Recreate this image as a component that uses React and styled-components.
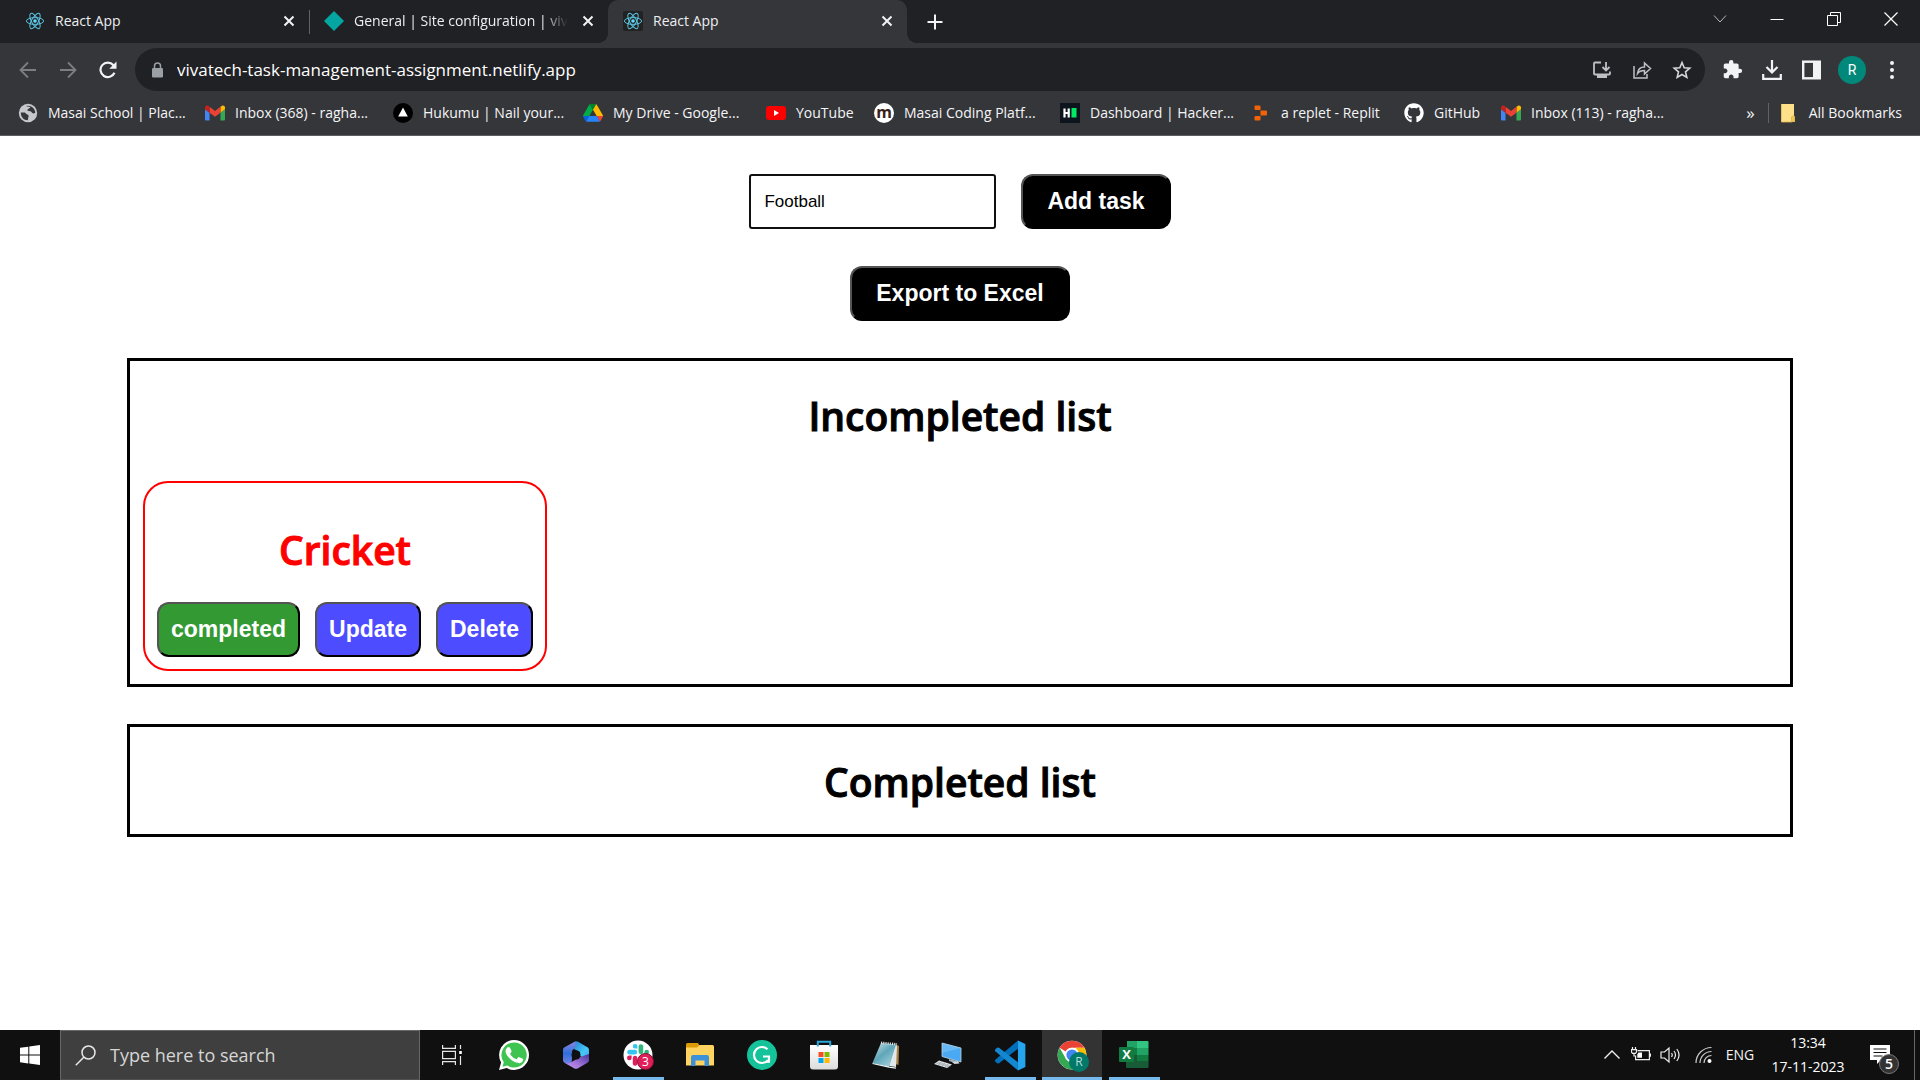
import React, { useState } from "react";
import styled, { createGlobalStyle } from "styled-components";
import { FaGithub } from "react-icons/fa";
import { MdExtension } from "react-icons/md";

const ui = `"Segoe UI", "Open Sans", "Noto Sans", sans-serif`;
const arial = `"Liberation Sans", Arial, sans-serif`;

const GlobalStyle = createGlobalStyle`
  *, *::before, *::after { box-sizing: border-box; }
  body { margin: 0; background: #fff; font-family: ${ui}; }
  button, input { font: inherit; margin: 0; }
  svg { display: block; flex: none; }
`;

const Screen = styled.div`
  display: flex;
  flex-direction: column;
  min-height: 100vh;
`;

/* ---------- browser chrome ---------- */

const Browser = styled.header`
  background: #35363a;
  color: #f1f3f4;
  border-bottom: 1px solid #5c5d60;
`;

const TabStrip = styled.div`
  display: flex;
  height: 43px;
  padding-left: 10px;
  background: #202124;
`;

const Tab = styled.div`
  position: relative;
  display: flex;
  align-items: center;
  gap: 10px;
  flex: 0 1 299px;
  min-width: 0;
  padding: 0 10px 2px 15px;
  border-radius: 10px 10px 0 0;
  background: ${(p) => (p.$active ? "#35363a" : "transparent")};

  &::before,
  &::after {
    content: "";
    display: ${(p) => (p.$active ? "block" : "none")};
    position: absolute;
    bottom: 0;
    width: 10px;
    height: 10px;
  }
  &::before {
    right: 100%;
    background: radial-gradient(circle at 0 0, transparent 10px, #35363a 10px);
  }
  &::after {
    left: 100%;
    background: radial-gradient(circle at 100% 0, transparent 10px, #35363a 10px);
  }
`;

const TabDivider = styled.span`
  align-self: center;
  flex: none;
  width: 1px;
  height: 24px;
  margin-right: -1px;
  background: #5f6368;
`;

const TabTitle = styled.span`
  flex: 1;
  min-width: 0;
  overflow: hidden;
  white-space: nowrap;
  font-size: 14px;
  line-height: 20px;
  color: #eceef0;
  mask-image: ${(p) => (p.$fade ? "linear-gradient(to right, #000 88%, transparent)" : "none")};
`;

const IconButton = styled.button`
  display: flex;
  align-items: center;
  justify-content: center;
  flex: none;
  width: ${(p) => p.$w || 40}px;
  height: ${(p) => p.$h || 40}px;
  padding: 0;
  border: 0;
  background: transparent;
  color: ${(p) => p.$color || "#f1f3f4"};
`;

const NewTab = styled(IconButton)`
  margin-left: 8px;
`;

const WindowControls = styled.div`
  display: flex;
  margin-left: auto;
`;

const Toolbar = styled.div`
  display: flex;
  align-items: center;
  height: 53px;
  padding: 0 8px;
`;

const Omnibox = styled.label`
  display: flex;
  align-items: center;
  gap: 10px;
  flex: 1;
  height: 43px;
  margin: 0 7px;
  padding: 0 3px 0 12px;
  border-radius: 22px;
  background: #202124;
`;

const Address = styled.input`
  flex: 1;
  min-width: 0;
  padding: 0;
  border: 0;
  outline: 0;
  background: transparent;
  color: #fff;
  font-size: 17px;
`;

const Row = styled.div`
  display: flex;
  align-items: center;
`;

const Avatar = styled.span`
  display: grid;
  place-items: center;
  width: 28px;
  height: 28px;
  border-radius: 50%;
  background: #00897b;
  color: #fff;
  font: 14px/1 Roboto, sans-serif;
`;

const BookmarksBar = styled.nav`
  display: flex;
  align-items: center;
  height: 39px;
  padding: 0 18px 5px;
`;

const Bookmark = styled.a`
  display: flex;
  align-items: center;
  gap: 10px;
  flex: 0 1 ${(p) => p.$w}px;
  min-width: 0;
  color: #f4f5f6;
  font-size: 14px;
  line-height: 20px;
  white-space: nowrap;
  text-decoration: none;
`;

const Overflow = styled.button`
  margin-left: auto;
  padding: 0 13px;
  border: 0;
  border-right: 1px solid #5f6368;
  background: transparent;
  color: #f4f5f6;
  font-size: 17px;
  line-height: 20px;
`;

const AllBookmarks = styled(Bookmark)`
  flex: none;
  margin-left: 12px;
`;

const RoundMark = styled.span`
  display: flex;
  align-items: center;
  justify-content: center;
  flex: none;
  width: 20px;
  height: 20px;
  padding-bottom: 3px;
  border-radius: 50%;
  background: #fff;
  color: #3a2018;
  font-size: 16px;
  font-weight: 700;
  line-height: 20px;
`;

/* ---------- task page ---------- */

const Page = styled.main`
  flex: 1;
  display: flex;
  flex-direction: column;
  align-items: center;
  gap: 37px;
  padding: 38px 127px;
`;

const Form = styled.form`
  display: flex;
  gap: 25px;
`;

const TaskInput = styled.input`
  width: 247px;
  height: 55px;
  padding: 0 13px;
  border: 2px solid #101010;
  border-radius: 3px;
  outline: 0;
  background: #fff;
  color: #000;
  font-family: ${arial};
  font-size: 17px;
`;

const Button = styled.button`
  height: 55px;
  padding: 0 ${(p) => p.$pad || 12}px;
  border: 2px outset #000;
  border-radius: 12px;
  background: ${(p) => p.$bg || "#000"};
  color: #fff;
  font-family: ${arial};
  font-size: 23px;
  font-weight: 700;
  white-space: nowrap;
`;

const List = styled.section`
  align-self: stretch;
  padding: 0 13px;
  border: 3px solid #000;
`;

const Heading = styled.h1`
  margin: 0;
  padding: 28px 0 25px;
  font-size: 39px;
  line-height: 54px;
  font-weight: 600;
  text-align: center;
  color: ${(p) => p.$color || "#000"};
  -webkit-text-stroke: 1px currentColor;
`;

const Cards = styled.div`
  display: flex;
  flex-wrap: wrap;
  gap: 13px;
  padding: 13px 0;
`;

const Card = styled.article`
  padding: 12px;
  border: 2px solid #f00;
  border-radius: 25px;
`;

const Actions = styled.div`
  display: flex;
  gap: 15px;
`;

/* ---------- taskbar ---------- */

const Taskbar = styled.footer`
  display: flex;
  height: 50px;
  background: #101010;
  color: #fff;
`;

const SearchBox = styled.label`
  display: flex;
  align-items: center;
  gap: 14px;
  width: 360px;
  padding: 0 14px;
  border: 1px solid #686868;
  border-bottom-color: #505050;
  background: #3f3f3f;
`;

const SearchInput = styled.input`
  flex: 1;
  min-width: 0;
  padding: 0;
  border: 0;
  outline: 0;
  background: transparent;
  color: #fff;
  font-size: 18px;
  &::placeholder { color: #d6d6d6; opacity: 1; }
`;

const AppButton = styled.button`
  position: relative;
  display: grid;
  place-items: center;
  width: 62px;
  padding: 0;
  border: 0;
  background: ${(p) => (p.$focused ? "linear-gradient(#333, #333) center / 60px 100% no-repeat" : "transparent")};
  color: #fff;

  &::after {
    content: "";
    display: ${(p) => (p.$open ? "block" : "none")};
    position: absolute;
    bottom: 0;
    left: ${(p) => (p.$focused ? 1 : 6)}px;
    right: ${(p) => (p.$focused ? 1 : 5)}px;
    height: 3px;
    background: #76b9ed;
  }
`;

const Apps = styled.div`
  display: flex;
  margin-left: 1px;
`;

const AppBadge = styled.span`
  position: absolute;
  left: ${(p) => p.$x}px;
  top: ${(p) => p.$y}px;
  display: grid;
  place-items: center;
  width: ${(p) => p.$size}px;
  height: ${(p) => p.$size}px;
  border-radius: 50%;
  border: ${(p) => p.$border || "0"};
  background: ${(p) => p.$bg};
  color: ${(p) => p.$color || "#fff"};
  font: ${(p) => p.$weight || 400} ${(p) => p.$font || 12}px/1 ${ui};
`;

const Tray = styled.div`
  display: flex;
  align-items: center;
  margin-left: auto;
  line-height: 24px;
`;

const Clock = styled.time`
  width: 80px;
  margin: 0 10px;
  text-align: center;
  white-space: nowrap;
  font-size: 14px;
`;

const Language = styled.button`
  width: 36px;
  padding: 0;
  border: 0;
  background: transparent;
  color: #f4f4f4;
  font-size: 14px;
  text-align: center;
`;

const NoticeButton = styled(AppButton)`
  width: 44px;
  height: 50px;
`;

const ShowDesktop = styled.button`
  width: 6px;
  height: 50px;
  margin-left: 12px;
  padding: 0;
  border: 0;
  border-left: 1px solid #666;
  background: transparent;
`;

/* ---------- drawings ---------- */

const Svg = ({ w = 20, h, vb = "0 0 20 20", children, ...rest }) => (
  <svg width={w} height={h || w} viewBox={vb} fill="none" aria-hidden="true" {...rest}>
    {children}
  </svg>
);

const ReactLogo = ({ dark }) => (
  <Svg>
    {dark && <rect width="20" height="20" rx="2" fill="#222" />}
    <g stroke="#61dafb" strokeWidth="1" opacity=".88">
      <ellipse cx="10" cy="10" rx="8.6" ry="3.4" />
      <ellipse cx="10" cy="10" rx="8.6" ry="3.4" transform="rotate(60 10 10)" />
      <ellipse cx="10" cy="10" rx="8.6" ry="3.4" transform="rotate(120 10 10)" />
    </g>
    <circle cx="10" cy="10" r="1.8" fill="#61dafb" />
  </Svg>
);

const Diamond = () => (
  <Svg>
    <path d="M10 0 20 10 10 20 0 10Z" fill="#05a6a2" />
  </Svg>
);

const Cross = () => (
  <Svg w={12} vb="0 0 12 12" stroke="currentColor" strokeWidth="2">
    <path d="M1.5 1.5l9 9m0-9l-9 9" />
  </Svg>
);

const Gmail = () => (
  <Svg vb="52 37 88 76">
    <path fill="#4285f4" d="M58 108h14V74L52 59v43c0 3.32 2.69 6 6 6" />
    <path fill="#34a853" d="M120 108h14c3.32 0 6-2.69 6-6V59l-20 15" />
    <path fill="#fbbc04" d="M120 48v26l20-15v-8c0-7.42-8.47-11.65-14.4-7.2" />
    <path fill="#ea4335" d="M72 74V48l24 18 24-18v26L96 92" />
    <path fill="#c5221f" d="M52 51v8l20 15V48l-5.6-4.2c-5.94-4.45-14.4-.22-14.4 7.2" />
  </Svg>
);

const Globe = () => (
  <Svg>
    <circle cx="10" cy="10" r="9.2" fill="#c4c7cb" />
    <path d="M2.800 9.500h3.700c1.500 0 1.200 1.800 2.700 2 1.300.1 1.600.900 1.300 2L9.800 17.300C5.600 17.200 2.700 13.900 2.800 9.500z" fill="#35363a" />
    <path d="M8.800 2.700c4.700-.5 8.300 2.700 8.500 7-1.200 1.200-3.300.8-3.800-.6-.4-1.300-2.300-.6-3.600-1.300-1-.6-.5-1.500.3-1.900l2.300-1.300c-1-.9-2.200-1.200-3.700-.9z" fill="#35363a" />
  </Svg>
);

const Hukumu = () => (
  <Svg>
    <circle cx="10" cy="10" r="10" fill="#000" />
    <path d="M10 4.500 14.800 13.500H5.200Z" fill="#fff" />
  </Svg>
);

const Drive = () => (
  <Svg vb="0 -4 87.3 87.3">
    <path d="m6.600 66.850 3.850 6.650c.8 1.400 1.950 2.500 3.300 3.300l13.750-23.800h-27.500c0 1.550.4 3.100 1.200 4.500z" fill="#0066da" />
    <path d="m43.650 25-13.750-23.800c-1.350.8-2.500 1.900-3.300 3.300l-25.400 44a9.060 9.060 0 0 0-1.200 4.500h27.500z" fill="#00ac47" />
    <path d="m73.550 76.800c1.350-.8 2.500-1.900 3.300-3.300l9.250-16c.8-1.400 1.200-2.950 1.200-4.500h-27.500l5.850 11.500z" fill="#ea4335" />
    <path d="m43.650 25 13.750-23.800c-1.350-.8-2.900-1.200-4.500-1.200h-18.500c-1.600 0-3.150.45-4.500 1.200z" fill="#00832d" />
    <path d="m59.800 53h-32.300l-13.750 23.800c1.350.8 2.900 1.200 4.500 1.200h50.800c1.600 0 3.150-.45 4.500-1.200z" fill="#2684fc" />
    <path d="m73.400 26.500-12.700-22c-.8-1.400-1.950-2.500-3.300-3.300l-13.750 23.800 16.150 28h27.450c0-1.550-.4-3.100-1.200-4.500z" fill="#ffba00" />
  </Svg>
);

const YouTube = () => (
  <Svg>
    <rect y="3" width="20" height="14" rx="3" fill="#f00" />
    <path d="M8 7l5 3-5 3z" fill="#fff" />
  </Svg>
);

const HackerRank = () => (
  <Svg>
    <rect width="20" height="20" fill="#0e141e" />
    <path d="M4.500 5.500v9M8.700 5.500v9M4.500 10h4.200" stroke="#fff" strokeWidth="2.200" />
    <rect x="11.500" y="5" width="5" height="9.500" fill="#00ea64" />
  </Svg>
);

const Replit = () => (
  <Svg>
    <path d="M4.500 2.500h4a1 1 0 0 1 1 1V7h-5a1 1 0 0 1-1-1V3.500a1 1 0 0 1 1-1zM9.500 7.500h5.500a1 1 0 0 1 1 1v3a1 1 0 0 1-1 1H9.500zM4.500 13h5v3.500a1 1 0 0 1-1 1h-4a1 1 0 0 1-1-1V14a1 1 0 0 1 1-1z" fill="#f26207" />
  </Svg>
);

const Folder = () => (
  <Svg w={18} h={20} vb="0 0 18 20">
    <path d="M0 1h13v12l1 1v5H0z" fill="#ffe08a" />
    <path d="M10.500 18.500v-4.500l1-1h2v5.500z" fill="#f2c94c" stroke="#cfa63c" strokeWidth=".6" />
    <path d="M.4 1v18h11" stroke="#dcb84c" strokeWidth=".8" />
  </Svg>
);

const WhatsApp = () => (
  <Svg w={32} vb="0 0 32 32">
    <path d="M16 1a15 15 0 0 1 0 30c-2.700 0-5.200-.7-7.300-1.900L1 31l2.100-7.500A15 15 0 0 1 16 1z" fill="#fff" />
    <path d="M16 3.400a12.600 12.600 0 1 1-6.700 23.200L4.500 27.800l1.300-4.600A12.600 12.600 0 0 1 16 3.400z" fill="#3fc351" />
    <path
      d="M12.200 9.200c-.3-.7-.7-.7-1-.7h-.9c-.4 0-.9.1-1.300.6-.5.5-1.700 1.700-1.700 4s1.700 4.600 2 4.900c.200.300 3.300 5.200 8.200 7.100 4 1.600 4.900 1.300 5.700 1.200.9-.1 2.800-1.100 3.200-2.300.4-1.100.4-2.100.3-2.300-.1-.2-.5-.3-.9-.5l-3.300-1.600c-.5-.2-.8-.300-1.100.2l-1.500 1.900c-.300.3-.6.400-1 .1-.5-.2-2-.7-3.800-2.300-1.400-1.300-2.400-2.800-2.600-3.300-.3-.5 0-.7.2-1l.7-.8.500-.8c.1-.3.1-.6 0-.9z"
      fill="#fff"
      transform="translate(1 .5) scale(.9)"
    />
  </Svg>
);

const M365 = () => (
  <Svg w={28} vb="0 0 28 28">
    <defs>
      <linearGradient id="ma" x1="0" y1="0" x2="1" y2="1"><stop stopColor="#2a7fd4" /><stop offset=".6" stopColor="#45c8f5" /><stop offset="1" stopColor="#3aa0ee" /></linearGradient>
      <linearGradient id="mb" x1="0" y1="0" x2="0" y2="1"><stop stopColor="#8a86e0" /><stop offset=".5" stopColor="#2f6fdc" /><stop offset="1" stopColor="#7d86e6" /></linearGradient>
      <linearGradient id="mc" x1="1" y1="0" x2="0" y2="1"><stop stopColor="#46349a" /><stop offset=".6" stopColor="#a777dc" /><stop offset="1" stopColor="#c79bf2" /></linearGradient>
    </defs>
    <path d="M13 .5 3 6C1.700 6.700 1 7.500 1 9v10c0 1.500.7 2.300 2 3l5 2.500c2-3 2-6 2-9.500V11c0-1.500.7-2.300 2-3l5-3z" fill="url(#mb)" />
    <path d="M13 .5c1-.5 2-.2 3 .3L25 6c1.300.7 2 1.500 2 3v11l-9-5v-4L12 8c2-2 2-4 1-7.500z" fill="url(#ma)" />
    <path d="M27 13v6c0 1.500-.7 2.300-2 3l-9 5.300c-1.300.7-2.700.7-4 0L3 22c3 1 5 0 7-1.200l8-4.800z" fill="url(#mc)" />
    <circle cx="14" cy="14" r="4.500" fill="#101010" />
  </Svg>
);

const slackArm =
  "M8.834 5.042a2.528 2.528 0 0 1-2.521-2.520A2.528 2.528 0 0 1 8.834 0a2.528 2.528 0 0 1 2.521 2.522v2.520H8.834zM8.834 6.313a2.528 2.528 0 0 1 0 5.042H2.522a2.528 2.528 0 0 1 0-5.042h6.312z";

const Slack = () => (
  <Svg w={30} vb="0 0 30 30">
    <circle cx="15" cy="15" r="14.500" fill="#fff" />
    <g transform="translate(4 4) scale(.917)">
      {["#36c5f0", "#2eb67d", "#ecb22e", "#e01e5a"].map((c, i) => (
        <path key={c} d={slackArm} fill={c} transform={`rotate(${i * 90} 12 12)`} />
      ))}
    </g>
  </Svg>
);

const Explorer = () => (
  <Svg w={28} vb="0 0 28 28">
    <path d="M0 3.500a1.500 1.500 0 0 1 1.500-1.500H12l1.500 2.500V8H0z" fill="#dd9a07" />
    <path d="M0 6.500h11L13.500 4H26.500A1.500 1.500 0 0 1 28 5.500V24.500H0z" fill="#ffd35f" />
    <path d="M5 25V16a2 2 0 0 1 2-2h14a2 2 0 0 1 2 2v9h-4.500v-5.500h-9V25z" fill="#3c91d9" />
  </Svg>
);

const Grammarly = () => (
  <Svg w={30} vb="0 0 30 30">
    <circle cx="15" cy="15" r="15" fill="#15c39a" />
    <path d="M20.500 9.200A8 8 0 1 0 21 20.300M16 16.500h6.500M22 15.500v6" stroke="#fff" strokeWidth="2.200" />
    <path d="M23 23l-5-.5 4-4z" fill="#fff" />
  </Svg>
);

const Store = () => (
  <Svg w={30} vb="0 0 30 30">
    <defs><linearGradient id="st" x1="0" y1="0" x2="0" y2="1"><stop stopColor="#fff" /><stop offset="1" stopColor="#dcdcdc" /></linearGradient></defs>
    <path d="M1 5h28v21.500a3 3 0 0 1-3 3H4a3 3 0 0 1-3-3z" fill="url(#st)" />
    <path d="M8.800 6.500V1.800h12.400v4.700" stroke="#2ba6dc" strokeWidth="2" />
    <path d="M9.500 12h5v5h-5z" fill="#f25022" />
    <path d="M15.500 12h5v5h-5z" fill="#7fba00" />
    <path d="M9.500 18h5v5h-5z" fill="#00a4ef" />
    <path d="M15.500 18h5v5h-5z" fill="#ffb900" />
  </Svg>
);

const Notepad = () => (
  <Svg w={30} vb="0 0 30 30">
    <defs><linearGradient id="np" x1="0" y1="0" x2=".8" y2="1"><stop stopColor="#cfe6ec" /><stop offset=".5" stopColor="#5fa6b8" /><stop offset="1" stopColor="#a7d3df" /></linearGradient></defs>
    <path d="M25 4.500 28 6 27.500 25 24.500 24z" fill="#a98248" />
    <path d="M24 5l2 1-1 21-7-1z" fill="#e3e8ea" />
    <path d="M10 3 25 4.500 18 27 1.500 23z" fill="url(#np)" />
    <path d="M1.500 23.500 18 27.200l7 1" stroke="#eef5f7" strokeWidth="1.200" />
    <path d="M10 2.800l16 1.500" stroke="#d9dde0" strokeWidth="2.500" strokeDasharray="1.200 1" />
  </Svg>
);

const ThisPc = () => (
  <Svg w={30} vb="0 0 30 30">
    <path d="M9 3 28 8v14L9 16.500z" fill="#4aa9f2" />
    <path d="M9 3 28 8 9 13z" fill="#86ccfa" opacity=".5" />
    <path d="M9 3 28 8v14L9 16.500z" stroke="#b9d4e6" strokeWidth=".8" />
    <path d="M16 19l8 2-2 2-6-2z" fill="#9db0bd" />
    <path d="M6 20.500 19 24.500 14 28 1 24z" fill="#e3e6e9" />
    <path d="M4.500 22l13 4M3 23l13 4M9 21.500l-4 3.500M12.500 22.500l-4 3.500M16 23.500l-4 3.500" stroke="#8d979e" strokeWidth=".6" />
    <path d="M19 22l6-1 1.500 2.500-5 .5z" fill="#cfd5d9" />
  </Svg>
);

const VsCode = () => (
  <Svg w={31} vb="0 0 100 100">
    <path d="M74 2 98 13v74L74 98z" fill="#24a5ee" />
    <path d="M74 2v26L13 75q-3 2-6 0l-6-5q-2-3 0-6z" fill="#0070bb" />
    <path d="M74 98V72L13 25q-3-2-6 0l-6 5q-2 3 0 6z" fill="#1387cf" />
  </Svg>
);

const Chrome = () => (
  <Svg w={30} vb="0 0 48 48">
    <circle cx="24" cy="24" r="23" fill="#fff" />
    <path d="M24 1a23 23 0 0 1 19.900 11.500H24A11.500 11.500 0 0 0 14 18.300L4.100 12.500A23 23 0 0 1 24 1z" fill="#ea4335" />
    <path d="M43.900 12.500A23 23 0 0 1 24 47l10-17.300a11.500 11.500 0 0 0 0-11.500L30 12.500z" fill="#fbbc04" />
    <path d="M4.100 12.500 14 29.700A11.500 11.500 0 0 0 34 29.700L24 47A23 23 0 0 1 4.100 12.500z" fill="#34a853" />
    <circle cx="24" cy="24" r="11.500" fill="#fff" />
    <circle cx="24" cy="24" r="9" fill="#4285f4" />
  </Svg>
);

const Excel = () => (
  <Svg w={30} vb="0 0 30 30">
    <path d="M8 1h11v14H8z" fill="#21a366" />
    <path d="M18 1h10.500a1 1 0 0 1 1 1v6H18z" fill="#33c481" />
    <path d="M18 8h11.500v7H18z" fill="#21a366" />
    <path d="M7 8h11v7H7z" fill="#107c41" />
    <path d="M7 15h11v13H8a1 1 0 0 1-1-1z" fill="#185c37" />
    <path d="M18 15h11.500v6H18z" fill="#107c41" />
    <path d="M18 21h11.500v6a1 1 0 0 1-1 1H18z" fill="#185c37" />
    <rect y="7" width="15" height="15" rx="1" fill="#107c41" />
    <text x="7.500" y="19" fill="#fff" fontFamily="Open Sans, sans-serif" fontWeight="700" fontSize="13" textAnchor="middle">X</text>
  </Svg>
);

const TaskView = () => (
  <Svg vb="0 0 20 20" stroke="#e6e6e6" strokeWidth="1.200">
    <path d="M.6 0v3.400h12.800V0M.6 20v-3.400h12.800V20M.6 6.400h12.800v7.200H.6zM18.500 0v4M18.500 11v9" />
    <path d="M17.200 6h2.600v3h-2.600z" fill="#fff" stroke="none" />
  </Svg>
);

const tabs = [
  { title: "React App", icon: <ReactLogo /> },
  { title: "General | Site configuration | viva", icon: <Diamond />, fade: true },
  { title: "React App", icon: <ReactLogo dark />, active: true },
];

const bookmarks = [
  ["Masai School | Plac...", 187, <Globe />],
  ["Inbox (368) - ragha...", 188, <Gmail />],
  ["Hukumu | Nail your...", 190, <Hukumu />],
  ["My Drive - Google...", 183, <Drive />],
  ["YouTube", 108, <YouTube />],
  ["Masai Coding Platf...", 186, <RoundMark>m</RoundMark>],
  ["Dashboard | Hacker...", 191, <HackerRank />],
  ["a replet - Replit", 153, <Replit />],
  ["GitHub", 97, <FaGithub size={20} color="#fff" />],
  ["Inbox (113) - ragha...", 188, <Gmail />],
];

const apps = [
  { name: "WhatsApp", icon: <WhatsApp /> },
  { name: "Microsoft 365", icon: <M365 /> },
  { name: "Slack", icon: <Slack />, open: true, badge: <AppBadge $x={30} $y={23} $size={17} $bg="#e01e5a" $border="1px solid #7d1034">3</AppBadge> },
  { name: "File Explorer", icon: <Explorer /> },
  { name: "Grammarly", icon: <Grammarly /> },
  { name: "Microsoft Store", icon: <Store /> },
  { name: "Notepad", icon: <Notepad /> },
  { name: "This PC", icon: <ThisPc /> },
  { name: "Visual Studio Code", icon: <VsCode />, open: true },
  { name: "Chrome", icon: <Chrome />, open: true, focused: true, badge: <AppBadge $x={28} $y={22} $size={20} $bg="#00796b" $color="#b9ded9">R</AppBadge> },
  { name: "Excel", icon: <Excel />, open: true },
];

export default function App() {
  const [task, setTask] = useState("Football");
  return (
    <Screen>
      <GlobalStyle />
      <Browser>
        <TabStrip>
          {tabs.map((t, i) => (
            <React.Fragment key={i}>
              <Tab $active={t.active}>
                {t.icon}
                <TabTitle $fade={t.fade}>{t.title}</TabTitle>
                <IconButton $w={20} $h={20} aria-label="Close tab"><Cross /></IconButton>
              </Tab>
              {i === 0 && <TabDivider />}
            </React.Fragment>
          ))}
          <NewTab $h={43} aria-label="New tab">
            <Svg w={16} vb="0 0 16 16" stroke="currentColor" strokeWidth="2"><path d="M8 .5v15M.5 8h15" /></Svg>
          </NewTab>
          <WindowControls>
            <IconButton $w={57} $h={37} aria-label="Search tabs">
              <Svg w={14} vb="0 0 14 14" stroke="#b8b9ba"><path d="M1 3.500l6 6.500 6-6.500" /></Svg>
            </IconButton>
            <IconButton $w={57} $h={37} aria-label="Minimize">
              <Svg w={14} vb="0 0 14 14" stroke="#fff"><path d="M.5 7.500h13" /></Svg>
            </IconButton>
            <IconButton $w={57} $h={37} aria-label="Restore">
              <Svg w={14} vb="0 0 14 14" stroke="#fff"><path d="M.5 3.500h10v10H.5zM3.500 3.500V.5h10v10h-3" /></Svg>
            </IconButton>
            <IconButton $w={58} $h={37} aria-label="Close window">
              <Svg w={14} vb="0 0 14 14" stroke="#fff" strokeWidth="1.200"><path d="M.5.5l13 13m0-13l-13 13" /></Svg>
            </IconButton>
          </WindowControls>
        </TabStrip>

        <Toolbar>
          <IconButton $color="#7c7e81" aria-label="Back">
            <Svg w={18} vb="0 0 18 18" stroke="currentColor" strokeWidth="1.800"><path d="M17 9H2M9 1.500 1.500 9 9 16.500" /></Svg>
          </IconButton>
          <IconButton $color="#7c7e81" aria-label="Forward">
            <Svg w={18} vb="0 0 18 18" stroke="currentColor" strokeWidth="1.800"><path d="M1 9h15M9 1.500 16.500 9 9 16.500" /></Svg>
          </IconButton>
          <IconButton aria-label="Reload">
            <Svg w={18} vb="0 0 18 18" stroke="currentColor" strokeWidth="2.200"><path d="M15.500 11.800A7.300 7.300 0 1 1 14.300 4L16 6" /><path d="M17.500.5v7.200h-7.200z" fill="currentColor" stroke="none" /></Svg>
          </IconButton>
          <Omnibox>
            <Svg><rect x="5" y="8" width="11" height="9.500" rx="1.200" fill="#9aa0a6" /><path d="M7.500 8.500V6a3 3 0 0 1 6 0v2.500" stroke="#9aa0a6" strokeWidth="1.500" /></Svg>
            <Address aria-label="Address" defaultValue="vivatech-task-management-assignment.netlify.app" />
            <Row>
              <IconButton $color="#bdc1c6" aria-label="Install app">
                <Svg stroke="currentColor" strokeWidth="1.800"><path d="M9 2.500H3a1 1 0 0 0-1 1v10a1 1 0 0 0 1 1h14a1 1 0 0 0 1-1v-2M14 2v8M10.500 7l3.500 3.500L17.500 7" /><path d="M5 14.500h10V18H5z" fill="currentColor" stroke="none" /></Svg>
              </IconButton>
              <IconButton $color="#bdc1c6" aria-label="Share">
                <Svg stroke="currentColor" strokeWidth="1.500"><path d="M2 6v12h13v-4M5.500 13.500c.5-4.500 3-6.500 7-6.500V3l6 5.500-6 5.500v-3.500c-3.500 0-5.500 1-7 3z" /></Svg>
              </IconButton>
              <IconButton $color="#d5d7da" aria-label="Bookmark this page">
                <Svg stroke="currentColor" strokeWidth="1.600"><path d="M10 2.500l2.200 5.200 5.600.5-4.300 3.700 1.300 5.500-4.800-2.900-4.800 2.900 1.300-5.500-4.300-3.700 5.600-.5z" /></Svg>
              </IconButton>
            </Row>
          </Omnibox>
          <IconButton aria-label="Extensions"><MdExtension size={21} /></IconButton>
          <IconButton aria-label="Downloads">
            <Svg stroke="currentColor" strokeWidth="2.200"><path d="M10 0v12M4.500 7 10 12.500 15.500 7M1.200 14v4.800h17.600V14" /></Svg>
          </IconButton>
          <IconButton aria-label="Side panel">
            <Svg><rect x="1.200" y="1.700" width="16.600" height="16.600" stroke="currentColor" strokeWidth="2.400" /><path d="M11 1.500h7v17h-7z" fill="currentColor" /></Svg>
          </IconButton>
          <IconButton aria-label="Profile"><Avatar>R</Avatar></IconButton>
          <IconButton aria-label="Menu">
            <Svg><g fill="currentColor"><circle cx="10" cy="3" r="2" /><circle cx="10" cy="10" r="2" /><circle cx="10" cy="17" r="2" /></g></Svg>
          </IconButton>
        </Toolbar>

        <BookmarksBar aria-label="Bookmarks">
          {bookmarks.map(([label, w, icon]) => (
            <Bookmark key={label} href="#" $w={w}>{icon}{label}</Bookmark>
          ))}
          <Overflow aria-label="More bookmarks">»</Overflow>
          <AllBookmarks href="#"><Folder />All Bookmarks</AllBookmarks>
        </BookmarksBar>
      </Browser>

      <Page>
        <Form onSubmit={(e) => e.preventDefault()}>
          <TaskInput aria-label="Task" value={task} onChange={(e) => setTask(e.target.value)} />
          <Button $pad={24}>Add task</Button>
        </Form>
        <Button $pad={24}>Export to Excel</Button>
        <List>
          <Heading>Incompleted list</Heading>
          <Cards>
            <Card>
              <Heading as="h2" $color="#f00">Cricket</Heading>
              <Actions>
                <Button $bg="#339933">completed</Button>
                <Button $bg="#4d4dff">Update</Button>
                <Button $bg="#4d4dff">Delete</Button>
              </Actions>
            </Card>
          </Cards>
        </List>
        <List>
          <Heading>Completed list</Heading>
        </List>
      </Page>

      <Taskbar>
        <IconButton $w={60} $h={50} aria-label="Start">
          <Svg><path d="M0 2.800 8.300 1.700V9.500H0zM9.300 1.500 20 0v9.500H9.300zM0 10.500h8.300v7.900L0 17.200zM9.300 10.500H20V20L9.300 18.500z" fill="#fff" /></Svg>
        </IconButton>
        <SearchBox>
          <Svg w={21} vb="0 0 21 21" stroke="#e8e8e8" strokeWidth="1.500"><circle cx="13.500" cy="7.500" r="6.500" /><path d="M9 12 .8 20.200" /></Svg>
          <SearchInput aria-label="Search" placeholder="Type here to search" />
        </SearchBox>
        <Apps>
          <AppButton aria-label="Task view"><TaskView /></AppButton>
          {apps.map((a) => (
            <AppButton key={a.name} aria-label={a.name} $open={a.open} $focused={a.focused}>
              {a.icon}
              {a.badge}
            </AppButton>
          ))}
        </Apps>
        <Tray>
          <IconButton $w={28} aria-label="Hidden icons">
            <Svg w={16} vb="0 0 16 16" stroke="#eee" strokeWidth="1.400"><path d="M.5 11.500 8 4l7.500 7.500" /></Svg>
          </IconButton>
          <IconButton $w={30} aria-label="Battery">
            <Svg w={20} stroke="#eee" strokeWidth="1.200"><path d="M6.500 5.600h11.900v9H4.600v-4M19.500 8.500v3.200M1.500 2v2.500M4.500 2v2.500M.5 4.600h5v2.500l-1 1.300h-3l-1-1.300zM3 8.500V11h2" /><path d="M7.500 7.500h3.500v5.300H6.300V9.500z" fill="#fff" stroke="none" /></Svg>
          </IconButton>
          <IconButton $w={30} aria-label="Volume">
            <Svg w={22} vb="0 0 22 20" stroke="#eee" strokeWidth="1.200"><path d="M1 7h3.500L9 3v14l-4.500-4H1zM11.500 8q1.500 2 0 4M14 6q3 4 0 8M16.800 4q4.500 6 0 12" /></Svg>
          </IconButton>
          <IconButton $w={36} aria-label="Wi-Fi">
            <Svg w={18} vb="0 0 18 18" stroke="#ccc" strokeWidth="1.200"><path d="M1 17A15.500 15.500 0 0 1 16.500 1.500M5 17A11.500 11.500 0 0 1 16.500 5.500M9 17a7.500 7.500 0 0 1 7.500-7.500" /><circle cx="14.500" cy="15" r="2" fill="#fff" stroke="none" /></Svg>
          </IconButton>
          <Language>ENG</Language>
          <Clock>13:34<br />17-11-2023</Clock>
          <NoticeButton aria-label="Notifications">
            <Svg w={20} vb="0 0 20 20"><path d="M0 0h20v15h-9l-4 4v-4H0z" fill="#fff" /><path d="M3.500 4h13M3.500 7.500h13M3.500 11h9" stroke="#101010" strokeWidth="1.200" /></Svg>
            <AppBadge $x={21} $y={24} $size={20} $bg="#333" $border="1px solid #777" $weight={600} $font={14}>5</AppBadge>
          </NoticeButton>
          <ShowDesktop aria-label="Show desktop" />
        </Tray>
      </Taskbar>
    </Screen>
  );
}
